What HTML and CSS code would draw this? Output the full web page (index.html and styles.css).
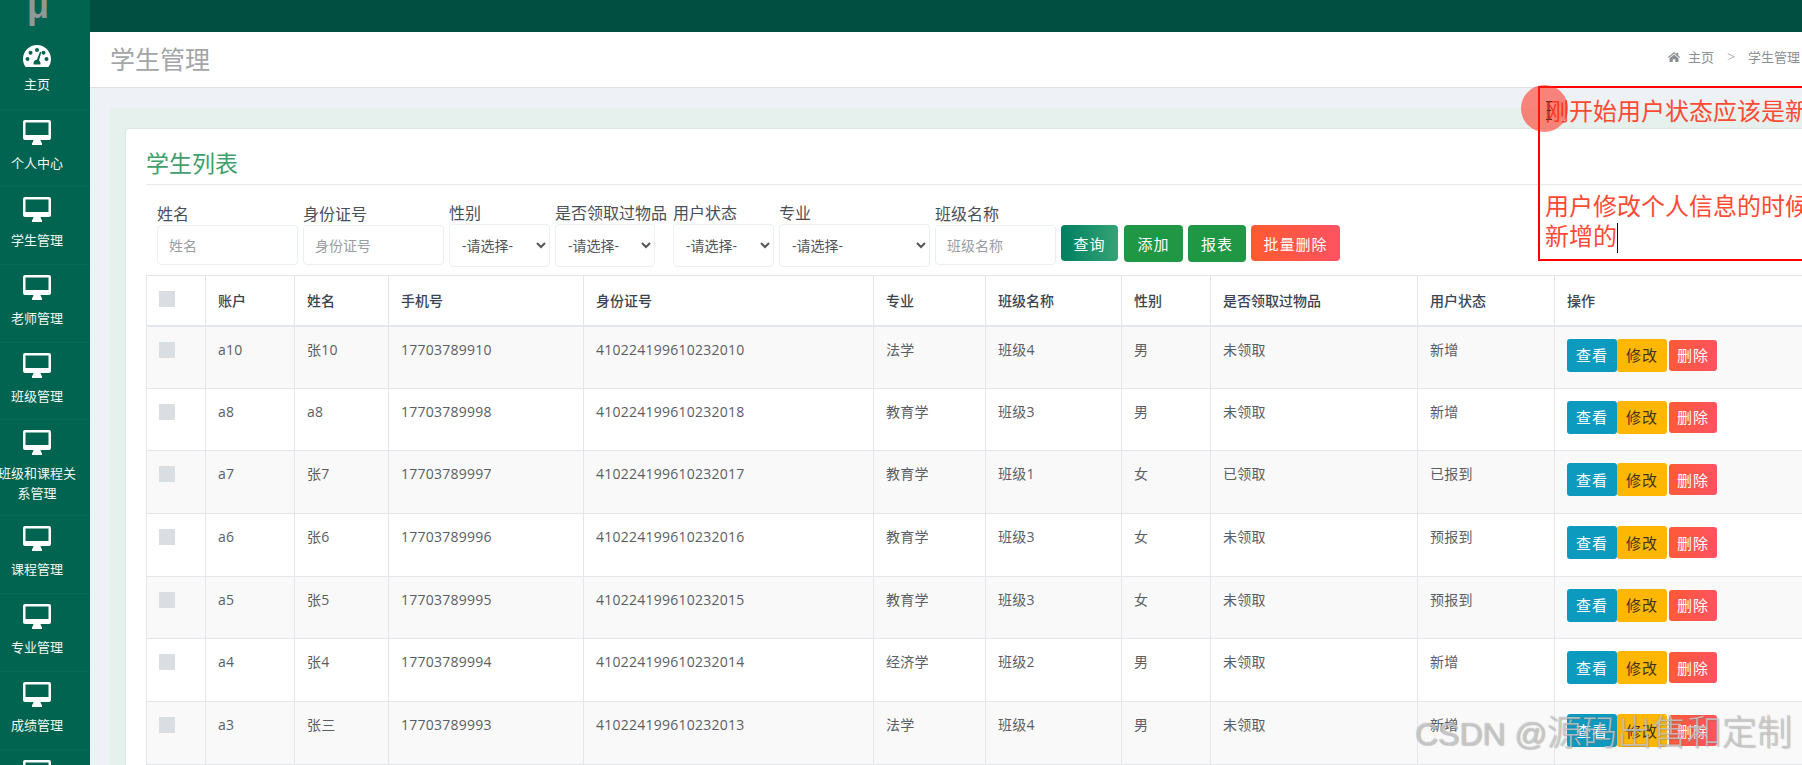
FILE: index.html
```html
<!DOCTYPE html>
<html lang="zh-CN">
<head>
<meta charset="utf-8">
<title>学生管理</title>
<link rel="stylesheet" href="styles.css">
</head>
<body>
<svg class="defs" width="0" height="0" aria-hidden="true">
  <symbol id="desktop" viewBox="0 0 28 25">
    <path fill-rule="evenodd" d="M2 0h24a2 2 0 0 1 2 2v16a2 2 0 0 1-2 2h-8.500q.3 2 1.500 3.200v1.800h-10v-1.800q1.200-1.200 1.500-3.200h-8.500a2 2 0 0 1-2-2v-16a2 2 0 0 1 2-2zM2.500 2.500v12.500h23v-12.500z"/>
  </symbol>
</svg>
<aside class="sidebar">
  <div class="logo">μ</div>
  <nav class="nav">
    <a class="nav-item"><span class="nav-in">
      <svg class="ico gauge" viewBox="0 0 28 22"><path fill-rule="evenodd" d="M14 0C6.300 0 0 6.300 0 14c0 2.700.8 5.400 2.200 7.600.3.300.6.400.9.400h21.800c.3 0 .7-.1.900-.4C27.200 19.400 28 16.700 28 14 28 6.300 21.700 0 14 0zM14 3a2 2 0 1 1 0 4 2 2 0 0 1 0-4zM7.500 5.700a2 2 0 1 1 0 4 2 2 0 0 1 0-4zM20.500 5.700a2 2 0 1 1 0 4 2 2 0 0 1 0-4zM4.500 12a2 2 0 1 1 0 4 2 2 0 0 1 0-4zM23.500 12a2 2 0 1 1 0 4 2 2 0 0 1 0-4zM17 6.800l1.300.4-2.300 8.400c.9.600 1.500 1.600 1.500 2.700 0 .4-.1.700-.2 1.100h-6.600c-.1-.4-.2-.7-.2-1.100 0-1.900 1.500-3.400 3.400-3.500z"/></svg>
      <span class="nav-text nav-text-first">主页</span></span></a>
    <a class="nav-item"><span class="nav-in"><svg class="ico"><use href="#desktop"/></svg><span class="nav-text">个人中心</span></span></a>
    <a class="nav-item"><span class="nav-in"><svg class="ico"><use href="#desktop"/></svg><span class="nav-text">学生管理</span></span></a>
    <a class="nav-item"><span class="nav-in"><svg class="ico"><use href="#desktop"/></svg><span class="nav-text">老师管理</span></span></a>
    <a class="nav-item"><span class="nav-in"><svg class="ico"><use href="#desktop"/></svg><span class="nav-text">班级管理</span></span></a>
    <a class="nav-item nav-tall"><span class="nav-in"><svg class="ico"><use href="#desktop"/></svg><span class="nav-text">班级和课程关系管理</span></span></a>
    <a class="nav-item"><span class="nav-in"><svg class="ico"><use href="#desktop"/></svg><span class="nav-text">课程管理</span></span></a>
    <a class="nav-item"><span class="nav-in"><svg class="ico"><use href="#desktop"/></svg><span class="nav-text">专业管理</span></span></a>
    <a class="nav-item"><span class="nav-in"><svg class="ico"><use href="#desktop"/></svg><span class="nav-text">成绩管理</span></span></a>
    <a class="nav-item"><span class="nav-in"><svg class="ico"><use href="#desktop"/></svg></span></a>
  </nav>
</aside>
<div class="main">
  <div class="topbar"></div>
  <header class="page-head">
    <h1 class="page-title">学生管理</h1>
    <div class="crumbs">
      <svg class="home" viewBox="0 0 24 20"><path d="M12 0l5 4.200V1.500h3.500v5.700L24 10.200l-1.500 1.600L12 3 1.500 11.800 0 10.200zM12 5l9 7.500V20h-6.500v-5.500h-5V20H3v-7.500z"/></svg>
      <span>主页</span>
      <span class="crumb-sep">&gt;</span>
      <span>学生管理</span>
    </div>
  </header>
  <div class="page-body">
    <div class="panel">
      <section class="card">
        <h2 class="card-title">学生列表</h2>
        <form class="filters">
          <label class="f f-input w141"><span class="f-label">姓名</span><input class="ctl" placeholder="姓名"></label>
          <label class="f f-input w141"><span class="f-label">身份证号</span><input class="ctl" placeholder="身份证号"></label>
          <label class="f f-select w101"><span class="f-label">性别</span><select class="ctl sel"><option>-请选择-</option></select></label>
          <label class="f f-select w113"><span class="f-label">是否领取过物品</span><select class="ctl sel sel100"><option>-请选择-</option></select></label>
          <label class="f f-select w101"><span class="f-label">用户状态</span><select class="ctl sel"><option>-请选择-</option></select></label>
          <label class="f f-select w151"><span class="f-label">专业</span><select class="ctl sel"><option>-请选择-</option></select></label>
          <label class="f f-input w121"><span class="f-label">班级名称</span><input class="ctl" placeholder="班级名称"></label>
          <button type="button" class="btn b-search">查询</button>
          <button type="button" class="btn b-add">添加</button>
          <button type="button" class="btn b-report">报表</button>
          <button type="button" class="btn b-del">批量删除</button>
        </form>
        <table class="grid">
          <colgroup>
            <col class="c1"><col class="c2"><col class="c3"><col class="c4"><col class="c5"><col class="c6"><col class="c7"><col class="c8"><col class="c9"><col class="c10"><col class="c11">
          </colgroup>
          <thead>
            <tr><th><i class="chk"></i></th><th>账户</th><th>姓名</th><th>手机号</th><th>身份证号</th><th>专业</th><th>班级名称</th><th>性别</th><th>是否领取过物品</th><th>用户状态</th><th>操作</th></tr>
          </thead>
          <tbody>
            <tr><td><i class="chk"></i></td><td>a10</td><td>张10</td><td>17703789910</td><td>410224199610232010</td><td>法学</td><td>班级4</td><td>男</td><td>未领取</td><td>新增</td><td class="ops"><button class="op op-view">查看</button><button class="op op-edit">修改</button><button class="op op-del">删除</button></td></tr>
            <tr><td><i class="chk"></i></td><td>a8</td><td>a8</td><td>17703789998</td><td>410224199610232018</td><td>教育学</td><td>班级3</td><td>男</td><td>未领取</td><td>新增</td><td class="ops"><button class="op op-view">查看</button><button class="op op-edit">修改</button><button class="op op-del">删除</button></td></tr>
            <tr><td><i class="chk"></i></td><td>a7</td><td>张7</td><td>17703789997</td><td>410224199610232017</td><td>教育学</td><td>班级1</td><td>女</td><td>已领取</td><td>已报到</td><td class="ops"><button class="op op-view">查看</button><button class="op op-edit">修改</button><button class="op op-del">删除</button></td></tr>
            <tr><td><i class="chk"></i></td><td>a6</td><td>张6</td><td>17703789996</td><td>410224199610232016</td><td>教育学</td><td>班级3</td><td>女</td><td>未领取</td><td>预报到</td><td class="ops"><button class="op op-view">查看</button><button class="op op-edit">修改</button><button class="op op-del">删除</button></td></tr>
            <tr><td><i class="chk"></i></td><td>a5</td><td>张5</td><td>17703789995</td><td>410224199610232015</td><td>教育学</td><td>班级3</td><td>女</td><td>未领取</td><td>预报到</td><td class="ops"><button class="op op-view">查看</button><button class="op op-edit">修改</button><button class="op op-del">删除</button></td></tr>
            <tr><td><i class="chk"></i></td><td>a4</td><td>张4</td><td>17703789994</td><td>410224199610232014</td><td>经济学</td><td>班级2</td><td>男</td><td>未领取</td><td>新增</td><td class="ops"><button class="op op-view">查看</button><button class="op op-edit">修改</button><button class="op op-del">删除</button></td></tr>
            <tr><td><i class="chk"></i></td><td>a3</td><td>张三</td><td>17703789993</td><td>410224199610232013</td><td>法学</td><td>班级4</td><td>男</td><td>未领取</td><td>新增</td><td class="ops"><button class="op op-view">查看</button><button class="op op-edit">修改</button><button class="op op-del">删除</button></td></tr>
          </tbody>
        </table>
      </section>
    </div>
  </div>
</div>
<div class="note">
  <p class="note-text">刚开始用户状态应该是新</p>
  <p class="note-text note-second">用户修改个人信息的时候<br>新增的<i class="caret"></i></p>
</div>
<div class="spot"></div>
<svg class="ibeam" viewBox="0 0 8 19"><path d="M1 .5h2.500l.5.500.5-.500H7M4 1v17M1 18.500h2.500l.5-.500.5.500H7M2 9.500h4" fill="none" stroke="#5a2a22" stroke-width="1"/></svg>
<div class="watermark">CSDN @<span class="wm-cjk">源码出售和定制</span></div>
</body>
</html>
```

FILE: styles.css
```css
* { box-sizing: border-box; }
html, body { height: 100%; }
body {
  margin: 0;
  display: flex;
  height: 765px;
  overflow: hidden;
  background: #eef1f5;
  color: #54585f;
  font-family: "Open Sans", "Noto Sans CJK SC", sans-serif;
  font-size: 14px;
}
.defs { position: absolute; }
.sidebar { flex: 0 0 90px; background: #006450; color: #fff; overflow: hidden; }
.logo {
  height: 32px;
  line-height: 12px;
  padding-left: 27px;
  font-family: "Liberation Sans", sans-serif;
  font-weight: 700;
  font-size: 36px;
  color: #8d9a96;
  overflow: hidden;
}
.nav-item { display: block; height: 77.7px; padding-top: 10px; border-bottom: 1px solid #056a55; }
.nav-tall { height: 96px; }
.nav-in { display: flex; flex-direction: column; align-items: center; width: 78px; margin-left: -2px; }
.ico { width: 28px; height: 25px; fill: #fff; display: block; }
.gauge { margin-top: 3px; height: 22px; }
.nav-text { margin-top: 8px; font-size: 13px; line-height: 20px; text-align: center; color: #f2f8f6; }
.nav-text-first { margin-top: 7px; }
.main { flex: 1 1 0; min-width: 0; overflow: hidden; }
.topbar { height: 32px; background: #004f40; }
.page-head {
  height: 56px;
  display: flex;
  align-items: center;
  justify-content: space-between;
  padding: 0 2px 4px 20px;
  background: #fff;
  border-bottom: 1px solid #dcdfe3;
}
.page-title { margin: 0; font-size: 25px; font-weight: 400; color: #a3a5a8; }
.crumbs { display: flex; align-items: center; gap: 8px; font-size: 13px; color: #8c8f93; margin-top: -2px; }
.home { width: 12px; height: 10px; fill: #8c8f93; }
.crumb-sep { margin: 0 5px; font-size: 14px; font-weight: 300; }
.page-body { padding: 20px 0 0 20px; }
.panel { width: 1900px; padding: 21px 16px 0; background: #e6f0ed; }
.card { width: 1860px; height: 700px; padding: 20px 20px 0; background: #fff; border-radius: 3px; box-shadow: 0 0 2px rgba(0, 0, 0, .15); }
.card-title {
  margin: 0;
  height: 36px;
  line-height: 28px;
  font-size: 23px;
  font-weight: 400;
  color: #3f9f6d;
  border-bottom: 1px solid #e8ebee;
}
.filters { display: flex; align-items: center; gap: 5px; height: 90px; padding: 8px 0 0 11px; }
.f { display: flex; flex-direction: column; flex: none; }
.f-label { font-size: 16px; line-height: 22px; color: #4a4f57; white-space: nowrap; }
.w141 { width: 141px; }
.w101 { width: 101px; }
.w113 { width: 113px; }
.w151 { width: 151px; }
.w121 { width: 121px; }
.ctl {
  width: 100%;
  height: 40px;
  padding: 0 11px;
  border: 1px solid #eaeff0;
  border-radius: 4px;
  background: #fff;
  font: inherit;
  font-size: 14px;
  color: #555;
  outline: none;
}
.ctl::placeholder { color: #9a9da1; }
.sel { height: 43px; padding: 0 8px; }
.sel100 { width: 100px; }
.btn {
  flex: none;
  margin-top: 18px;
  height: 36px;
  padding: 0;
  border: 0;
  border-radius: 4px;
  font: inherit;
  font-size: 15px;
  letter-spacing: 1px;
  color: #fff;
}
.b-search { width: 57px; background: linear-gradient(90deg, #007f61, #35a376); }
.b-add { width: 59px; margin-left: 1px; background: #1f9745; height: 37px; }
.b-report { width: 58px; background: #1f9745; height: 37px; }
.b-del { width: 89px; background: linear-gradient(90deg, #ff5a2e, #ff5263); }
.grid { table-layout: fixed; width: 1808px; border-collapse: collapse; color: #5a5e64; }
.c1 { width: 59px; }
.c2 { width: 89px; }
.c3 { width: 94px; }
.c4 { width: 195px; }
.c5 { width: 290px; }
.c6 { width: 112px; }
.c7 { width: 136px; }
.c8 { width: 89px; }
.c9 { width: 207px; }
.c10 { width: 137px; }
.c11 { width: 400px; }
th, td { border: 1px solid #e3e6ea; padding: 0 12px; vertical-align: top; text-align: left; }
thead tr { height: 50px; }
th { vertical-align: middle; border-bottom-width: 2px; font-size: 14px; font-weight: 500; color: #3a4450; }
tbody tr { height: 62.7px; }
td { padding-top: 13px; line-height: 20px; font-size: 14px; letter-spacing: .25px; }
tbody tr:nth-child(odd) { background: #f9f9f9; }
.chk { display: block; width: 16px; height: 16px; background: #dadde1; }
th .chk { margin-top: -2px; }
td .chk { margin-top: 2px; }
.ops { padding-top: 12px; white-space: nowrap; font-size: 0; }
.op {
  height: 33px;
  width: 50px;
  padding: 0;
  border: 0;
  border-radius: 3px;
  font: inherit;
  font-size: 15px;
  letter-spacing: 1px;
  vertical-align: top;
}
.op-view { background: #0d9abf; color: #fff; }
.op-edit { background: #ffb703; color: #3c3420; }
.op-del { width: 48px; height: 31px; margin: 1px 0 0 2px; background: linear-gradient(100deg, #ff5a36, #ff5263); color: #fff; }
.note {
  position: absolute;
  left: 1538px;
  top: 86px;
  width: 300px;
  height: 175px;
  border: 2px solid #f00;
  padding: 7px 0 0 5px;
}
.note-text {
  margin: 0;
  white-space: nowrap;
  font-family: "Noto Sans CJK SC", sans-serif;
  font-size: 24px;
  line-height: 30px;
  color: #ff4a33;
}
.note-second { margin-top: 65px; }
.caret { display: inline-block; width: 1px; height: 30px; background: #111; vertical-align: middle; }
.spot {
  position: absolute;
  left: 1521px;
  top: 85px;
  width: 47px;
  height: 47px;
  border-radius: 50%;
  background: rgba(255, 40, 20, .55);
}
.ibeam { position: absolute; left: 1545px; top: 101px; width: 8px; height: 19px; }
.watermark {
  position: absolute;
  left: 1415px;
  top: 710px;
  white-space: nowrap;
  font-family: "Liberation Sans", "Noto Sans CJK SC", sans-serif;
  font-size: 32px;
  line-height: 46px;
  color: rgba(255, 255, 255, .55);
  text-shadow: 0 0 1px rgba(90, 90, 90, .7), 1px 1px 1px rgba(130, 130, 130, .35);
}
.wm-cjk { font-size: 35px; font-weight: 300; }
```
